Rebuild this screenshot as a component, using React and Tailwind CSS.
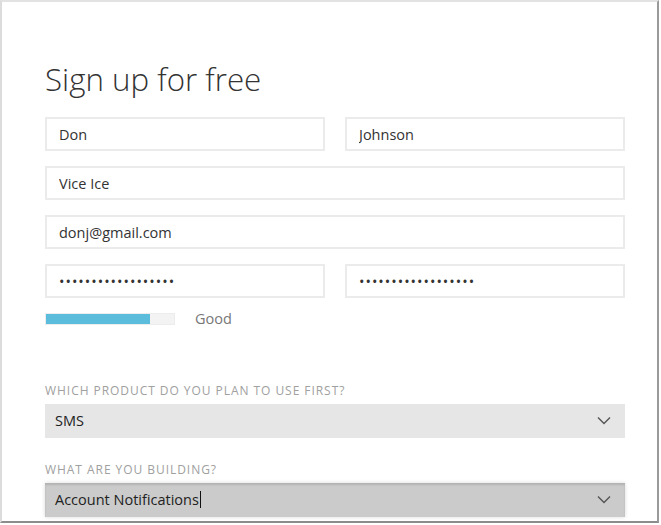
import React from "react";

const inputBase =
  "h-[34px] w-full border-2 border-[#ebebeb] bg-white px-[12px] text-[14.5px] text-[#333] outline-none";

function Chevron() {
  return (
    <svg width="14" height="9" viewBox="0 0 14 9" fill="none">
      <path d="M1 1.5l6 6 6-6" stroke="#555" strokeWidth="1.4" />
    </svg>
  );
}

function Select({ value, active }) {
  return (
    <div
      className={
        "flex h-[34px] items-center justify-between pl-[10px] pr-[14px] text-[14.5px] text-[#222] " +
        (active
          ? "bg-[#cbcbcb] shadow-[inset_0_2px_2px_rgba(0,0,0,0.12),0_0_4px_rgba(0,0,0,0.15)]"
          : "bg-[#e6e6e6]")
      }
    >
      <span className="flex items-center">
        {value}
        {active && <span className="ml-[1px] inline-block h-[17px] w-px bg-[#111]" />}
      </span>
      <Chevron />
    </div>
  );
}

export default function App() {
  const dots = "••••••••••••••••••";
  return (
    <div className="h-[525px] w-[661px] bg-white font-['Open_Sans',sans-serif]">
      <div className="h-[523px] w-[659px] border-l-2 border-t-2 border-r-2 border-b-2 border-l-[#dcdcdc] border-t-[#e2e2e2] border-r-[#9a9a9a] border-b-[#8c8c8c] pl-[43px] pt-[57px]">
        <h1 className="text-[31.3px] font-light leading-[40px] text-[#333]">Sign up for free</h1>

        <div className="mt-[18px] flex w-[580px] flex-col gap-[15px]">
          <div className="grid grid-cols-2 gap-[20px]">
            <input className={inputBase} defaultValue="Don" />
            <input className={inputBase} defaultValue="Johnson" />
          </div>
          <input className={inputBase} defaultValue="Vice Ice" />
          <input className={inputBase} defaultValue="donj@gmail.com" />
          <div className="grid grid-cols-2 gap-[20px]">
            <input type="password" className={inputBase + " text-[12px] tracking-[1px]"} defaultValue={dots} />
            <input type="password" className={inputBase + " text-[12px] tracking-[1px]"} defaultValue={dots} />
          </div>
        </div>

        <div className="mt-[10px] flex items-center gap-[20px]">
          <div className="flex h-[12px] w-[130px] border border-[#ececec] bg-[#f3f3f3]">
            <div className="h-full w-[104px] bg-[#5bbcdb]" />
          </div>
          <span className="text-[14.5px] text-[#777]">Good</span>
        </div>

        <div className="mt-[52px] w-[580px]">
          <div className="text-[12px] tracking-[0.95px] text-[#a0a0a0]">WHICH PRODUCT DO YOU PLAN TO USE FIRST?</div>
          <div className="mt-[4px]">
            <Select value="SMS" />
          </div>
          <div className="mt-[23px] text-[12px] tracking-[0.95px] text-[#a0a0a0]">WHAT ARE YOU BUILDING?</div>
          <div className="mt-[4px]">
            <Select value="Account Notifications" active />
          </div>
        </div>
      </div>
    </div>
  );
}
